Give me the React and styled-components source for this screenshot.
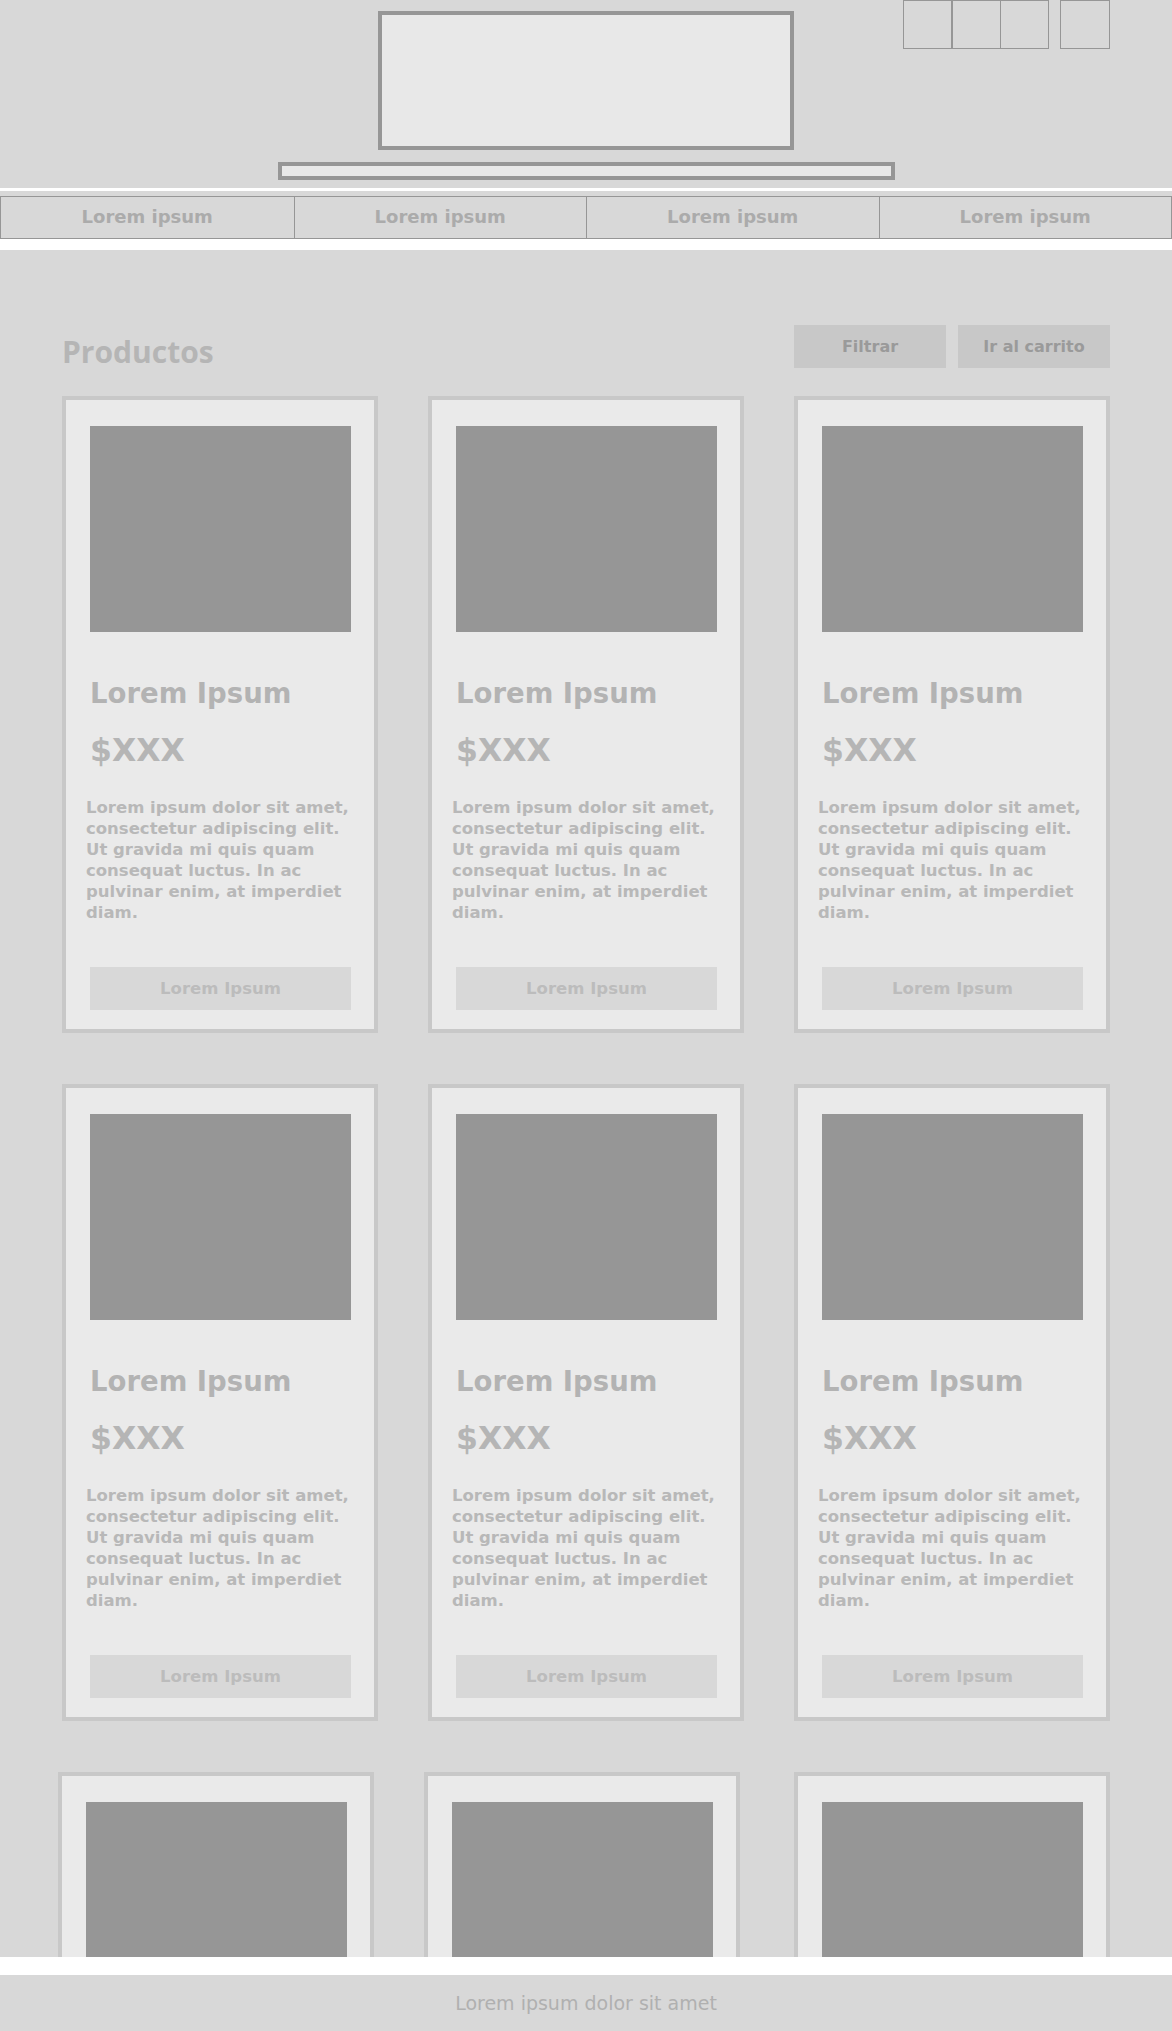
import React from 'react'
import styled, { createGlobalStyle } from 'styled-components'

const GlobalStyle = createGlobalStyle`
    html, body {
        margin: 0;
        padding: 0;
        background: #ffffff;
    }
    * {
        box-sizing: border-box;
    }
`

const navItems = ['Lorem ipsum', 'Lorem ipsum', 'Lorem ipsum', 'Lorem ipsum']
const products = Array.from({ length: 9 }, (_, i) => i)
const description =
    'Lorem ipsum dolor sit amet, consectetur adipiscing elit. Ut gravida mi quis quam consequat luctus. In ac pulvinar enim, at imperdiet diam.'

const App = () => {
    return (
        <Page>
            <GlobalStyle />
            <Header>
                <div />
                <Brand>
                    <Logo />
                    <SearchBar />
                </Brand>
                <Tools>
                    <ToolGroup>
                        <ToolBox />
                        <ToolBox />
                        <ToolBox joined />
                    </ToolGroup>
                    <ToolBox wide />
                </Tools>
            </Header>
            <NavWrap>
                <Nav>
                    {navItems.map((item, i) => (
                        <NavItem key={i} href="">{item}</NavItem>
                    ))}
                </Nav>
            </NavWrap>
            <Main>
                <Toolbar>
                    <Heading>Productos</Heading>
                    <Actions>
                        <ActionButton>Filtrar</ActionButton>
                        <ActionButton>Ir al carrito</ActionButton>
                    </Actions>
                </Toolbar>
                <Grid>
                    {products.map((p) => (
                        <Card key={p}>
                            <Thumb />
                            <Title>Lorem Ipsum</Title>
                            <Price>$XXX</Price>
                            <Description>{description}</Description>
                            <CardButton>Lorem Ipsum</CardButton>
                        </Card>
                    ))}
                </Grid>
            </Main>
            <Footer>Lorem ipsum dolor sit amet</Footer>
        </Page>
    )
}

const Page = styled.div`
    height: 100vh;
    display: flex;
    flex-direction: column;
    overflow: hidden;
    font-family: "DejaVu Sans", Verdana, sans-serif;
`

const Header = styled.header`
    flex: none;
    height: 188px;
    background-color: #d8d8d8;
    display: grid;
    grid-template-columns: 1fr auto 1fr;
`

const Brand = styled.div`
    display: flex;
    flex-direction: column;
    align-items: center;
    gap: 12px;
    padding-top: 11px;
`

const Logo = styled.div`
    width: 416px;
    height: 139px;
    background-color: #e8e8e8;
    border: 4px solid #969696;
`

const SearchBar = styled.div`
    width: 617px;
    height: 18px;
    background-color: #e8e8e8;
    border: 4px solid #969696;
`

const Tools = styled.div`
    justify-self: end;
    align-self: start;
    display: flex;
    gap: 11px;
    padding-right: 62px;
`

const ToolGroup = styled.div`
    display: flex;
`

const ToolBox = styled.div`
    width: ${(p) => (p.wide ? '50px' : p.joined ? '48px' : '49px')};
    height: 49px;
    border: 1px solid #969696;
    border-left-width: ${(p) => (p.joined ? '0' : '1px')};
`

const NavWrap = styled.div`
    flex: none;
    margin-top: 3px;
    padding-top: 5px;
    background-color: #d8d8d8;
`

const Nav = styled.nav`
    display: grid;
    grid-template-columns: repeat(4, 1fr);
    border: 1px solid #969696;
`

const NavItem = styled.a`
    height: 41px;
    line-height: 40px;
    text-align: center;
    text-decoration: none;
    font-size: 18px;
    font-weight: 700;
    color: #ababab;
    & + & {
        border-left: 1px solid #969696;
    }
`

const Main = styled.main`
    flex: 1 1 0;
    min-height: 0;
    overflow: hidden;
    margin-top: 11px;
    background-color: #d8d8d8;
    padding: 75px 62px 0;
`

const Toolbar = styled.div`
    display: flex;
    justify-content: space-between;
    align-items: flex-start;
    margin-bottom: 24px;
`

const Heading = styled.h1`
    margin: 6px 0 0;
    font-family: "Open Sans", sans-serif;
    font-size: 30px;
    line-height: 41px;
    font-weight: 700;
    color: #b5b5b5;
`

const Actions = styled.div`
    display: flex;
    gap: 12px;
`

const ActionButton = styled.button`
    width: 152px;
    height: 43px;
    border: none;
    background-color: #c8c8c8;
    color: #9a9a9a;
    font-family: "DejaVu Sans", sans-serif;
    font-size: 16px;
    font-weight: 700;
`

const Grid = styled.div`
    display: grid;
    grid-template-columns: repeat(3, 316px);
    column-gap: 50px;
    row-gap: 51px;
`

const Card = styled.article`
    display: flex;
    flex-direction: column;
    background-color: #eaeaea;
    border: 4px solid #c8c8c8;
    padding: 26px 23px 19px 24px;
    &:nth-child(7),
    &:nth-child(8) {
        transform: translateX(-4px);
    }
`

const Thumb = styled.div`
    height: 206px;
    background-color: #969696;
`

const Title = styled.h2`
    margin: 45px 0 0;
    font-size: 27.5px;
    line-height: 32px;
    font-weight: 700;
    color: #b3b3b3;
`

const Price = styled.div`
    margin-top: 23px;
    font-size: 31.5px;
    line-height: 36px;
    font-weight: 700;
    color: #b5b5b5;
`

const Description = styled.p`
    margin: 29px -4px 0 -4px;
    font-size: 16.5px;
    line-height: 21px;
    font-weight: 700;
    color: #b8b8b8;
`

const CardButton = styled.button`
    margin-top: 44px;
    height: 43px;
    border: none;
    background-color: #d8d8d8;
    color: #bcbcbc;
    font-family: "DejaVu Sans", sans-serif;
    font-size: 16.5px;
    font-weight: 700;
`

const Footer = styled.footer`
    flex: none;
    margin-top: 18px;
    height: 56px;
    line-height: 56px;
    background-color: #d8d8d8;
    text-align: center;
    font-size: 19px;
    color: #b0b0b0;
`

export default App
